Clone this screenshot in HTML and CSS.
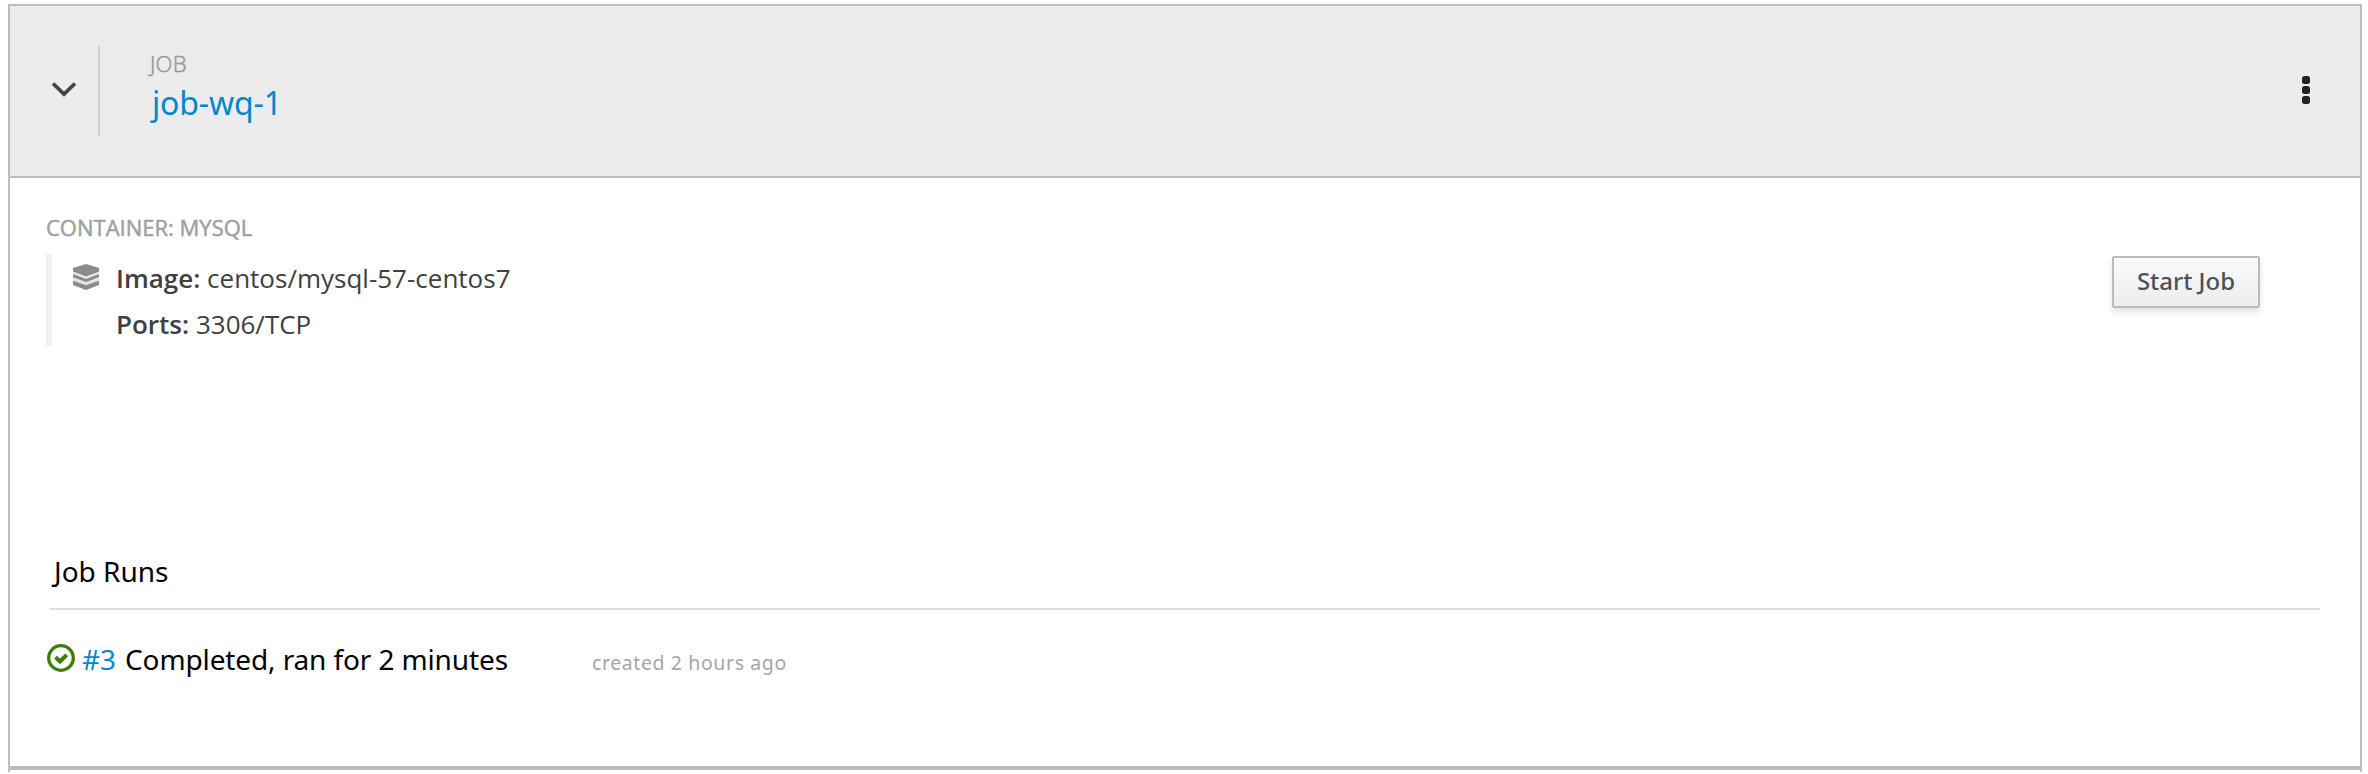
FILE: index.html
```html
<!DOCTYPE html>
<html lang="en">
<head>
<meta charset="utf-8">
<title>job-wq-1</title>
<link rel="stylesheet" href="styles.css">
</head>
<body>
<main class="card">
  <header class="card-header">
    <div class="toggle">
      <svg width="26" height="18" viewBox="0 0 26 18"><path d="M2 3.500 13 14 24 3.500" fill="none" stroke="#444" stroke-width="3.800"/></svg>
    </div>
    <div class="heading">
      <div class="kind"><span>JOB</span></div>
      <a class="name">job-wq-1</a>
    </div>
    <svg class="kebab" width="10" height="30" viewBox="0 0 10 30" fill="#222"><rect x="1" y="1" width="8" height="8" rx="2.500"/><rect x="1" y="11" width="8" height="8" rx="2.500"/><rect x="1" y="21" width="8" height="8" rx="2.500"/></svg>
  </header>
  <section class="details">
    <div class="container-info">
      <div class="container-label"><span>CONTAINER: MYSQL</span></div>
      <div class="container-box">
        <svg class="layers" width="28" height="28" viewBox="0 0 28 28" fill="#8b8b8b">
          <path d="M1 6H27V22L14 27 1 22Z" opacity=".2"/>
          <path d="M14 1 27 5V8.500L14 13.500 1 8.500V5Z"/>
          <path d="M1 11 14 16 27 11V14.200L14 19 1 14.200Z"/>
          <path d="M1 17 14 22 27 17V22L14 27 1 22Z"/>
          <path d="M1 17 14 21.500 27 17" fill="none" stroke="#dcdcdc" stroke-width="1.500"/>
        </svg>
        <div class="specs">
          <div class="spec"><span class="image"><b>Image:</b> centos/mysql-57-centos7</span></div>
          <div class="spec"><span class="ports"><b>Ports:</b> 3306/TCP</span></div>
        </div>
      </div>
    </div>
    <button class="start">Start Job</button>
  </section>
  <section class="runs">
    <h2 class="runs-title"><span>Job Runs</span></h2>
    <div class="run">
      <svg class="ok" width="28" height="28" viewBox="0 0 28 28" fill="none" stroke="#3f7d0b"><circle cx="14" cy="14" r="12.300" stroke-width="3.300"/><path d="M8.500 13.300 13 17.500 19.800 10.800" stroke-width="4"/></svg>
      <a class="number">#3</a>
      <span class="status">Completed, ran for 2 minutes</span>
      <span class="created">created 2 hours ago</span>
    </div>
  </section>
</main>
</body>
</html>
```
FILE: styles.css
```css
* { box-sizing: border-box; }
body {
  margin: 0;
  padding: 4px 6px 2px 8px;
  height: 774px;
  overflow: hidden;
  background: #fff;
  font-family: "Noto Sans", "Open Sans", sans-serif;
  color: #000;
}
.card {
  height: 768px;
  padding-bottom: 2px;
  border: 2px solid #bdbdbd;
  border-bottom: 0;
  display: flex;
  flex-direction: column;
}
.card-header {
  height: 172px;
  flex: none;
  display: flex;
  background: #ececec;
  border-bottom: 2px solid #bdbdbd;
}
.toggle {
  width: 90px;
  height: 90px;
  margin-top: 40px;
  padding: 34px 0 0 41px;
  border-right: 2px solid #d1d1d1;
}
.toggle svg { display: block; }
.heading { flex: 1; padding: 44px 0 0 50px; }
.kind {
  font: 300 22px/26px "Open Sans", sans-serif;
  letter-spacing: .2px;
  color: #999;
  -webkit-text-stroke: .5px #999;
}
.name {
  display: block;
  margin: 7px 0 0 2px;
  font-size: 32px;
  line-height: 40px;
  letter-spacing: -.15px;
  color: #0088ce;
}
.kebab { margin: 69px 49px 0 0; }
.details {
  height: 373px;
  flex: none;
  display: flex;
  justify-content: space-between;
  padding: 34px 100px 0 36px;
}
.container-label {
  font: 400 22px/30px "Open Sans", sans-serif;
  color: #a0a0a0;
  -webkit-text-stroke: .5px #a0a0a0;
}
.container-box {
  display: flex;
  height: 92px;
  margin-top: 12px;
  padding-left: 20px;
  border-left: 6px solid #f0f0f0;
}
.layers { margin-top: 9px; }
.specs { margin: 1px 0 0 16px; }
.spec {
  font: 400 26px/46px "Open Sans", sans-serif;
  color: #404040;
  white-space: nowrap;
}
.spec b { font-weight: 600; }
.start {
  width: 148px;
  height: 52px;
  margin-top: 44px;
  padding: 0 0 2px;
  border: 2px solid #bbb;
  border-radius: 2px;
  background: linear-gradient(#fafafa, #ededed);
  box-shadow: 0 4px 6px rgba(3, 3, 3, .12);
  font: 500 24px/44px "Noto Sans", sans-serif;
  color: #4d5258;
}
.runs {
  flex: 1;
  padding: 0 40px 0 37px;
  border-bottom: 4px solid #bbb;
}
.runs-title {
  margin: 0 0 0 3px;
  padding-left: 4px;
  height: 59px;
  border-bottom: 2px solid #ddd;
  font-size: 28px;
  line-height: 40px;
  font-weight: 400;
}
.run {
  display: flex;
  margin-top: 29px;
  font-size: 28px;
  line-height: 40px;
  white-space: nowrap;
}
.ok { margin-top: 5px; }
.number { margin-left: 7px; width: 43px; color: #0088ce; }
.status { width: 467px; letter-spacing: -.12px; }
.created {
  font-size: 19.5px;
  line-height: 48px;
  height: 40px;
  letter-spacing: .6px;
  color: #a6a6a6;
}
```
